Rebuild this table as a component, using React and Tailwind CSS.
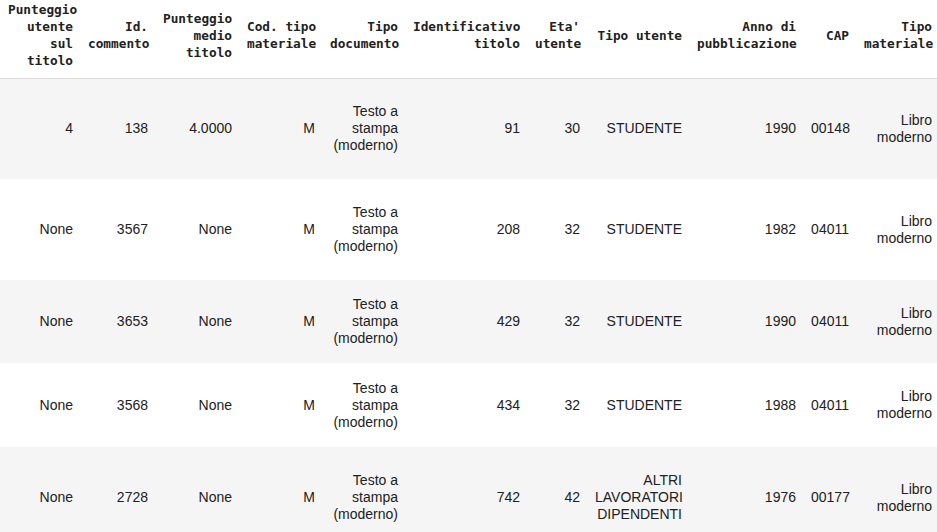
import React from "react";

const cols = [80, 75, 84, 83, 83, 122, 60, 102, 114, 53, 83];

const headers = [
  ["Punteggio", "utente", "sul", "titolo"],
  ["Id.", "commento"],
  ["Punteggio", "medio", "titolo"],
  ["Cod. tipo", "materiale"],
  ["Tipo", "documento"],
  ["Identificativo", "titolo"],
  ["Eta'", "utente"],
  ["Tipo utente"],
  ["Anno di", "pubblicazione"],
  ["CAP"],
  ["Tipo", "materiale"],
];

const rows = [
  { h: 101, bg: "bg-[#f5f5f5]", cells: ["4", "138", "4.0000", "M", "Testo a stampa (moderno)", "91", "30", "STUDENTE", "1990", "00148", "Libro moderno"] },
  { h: 101, bg: "bg-white", cells: ["None", "3567", "None", "M", "Testo a stampa (moderno)", "208", "32", "STUDENTE", "1982", "04011", "Libro moderno"] },
  { h: 83, bg: "bg-[#f5f5f5]", cells: ["None", "3653", "None", "M", "Testo a stampa (moderno)", "429", "32", "STUDENTE", "1990", "04011", "Libro moderno"] },
  { h: 84, bg: "bg-white", cells: ["None", "3568", "None", "M", "Testo a stampa (moderno)", "434", "32", "STUDENTE", "1988", "04011", "Libro moderno"] },
  { h: 101, bg: "bg-[#f5f5f5]", cells: ["None", "2728", "None", "M", "Testo a stampa (moderno)", "742", "42", "ALTRI LAVORATORI DIPENDENTI", "1976", "00177", "Libro moderno"] },
];

export default function App() {
  return (
    <div className="w-[937px] h-[532px] overflow-hidden bg-white">
      <table className="table-fixed border-collapse w-[939px]">
        <colgroup>
          {cols.map((w, i) => (
            <col key={i} style={{ width: w }} />
          ))}
        </colgroup>
        <thead>
          <tr className="h-[78px] border-b border-[#dcdcdc]">
            {headers.map((lines, i) => (
              <th
                key={i}
                className="align-middle text-right pl-[8px] pr-[7px] pt-[1px] pb-[8px] font-bold text-[12.75px] leading-[17px] text-[#212121] font-['DejaVu_Sans_Mono',monospace] whitespace-nowrap"
              >
                {lines.map((l, j) => (
                  <React.Fragment key={j}>
                    {j > 0 && <br />}
                    {l}
                  </React.Fragment>
                ))}
              </th>
            ))}
          </tr>
        </thead>
        <tbody>
          {rows.map((r, i) => (
            <tr key={i} className={r.bg} style={{ height: r.h }}>
              {r.cells.map((c, j) => (
                <td
                  key={j}
                  className="align-middle text-right pl-[8px] pr-[7px] py-0 text-[14px] leading-[17px] text-[#212121] font-['Liberation_Sans',Arial,sans-serif]"
                >
                  {c}
                </td>
              ))}
            </tr>
          ))}
        </tbody>
      </table>
    </div>
  );
}
